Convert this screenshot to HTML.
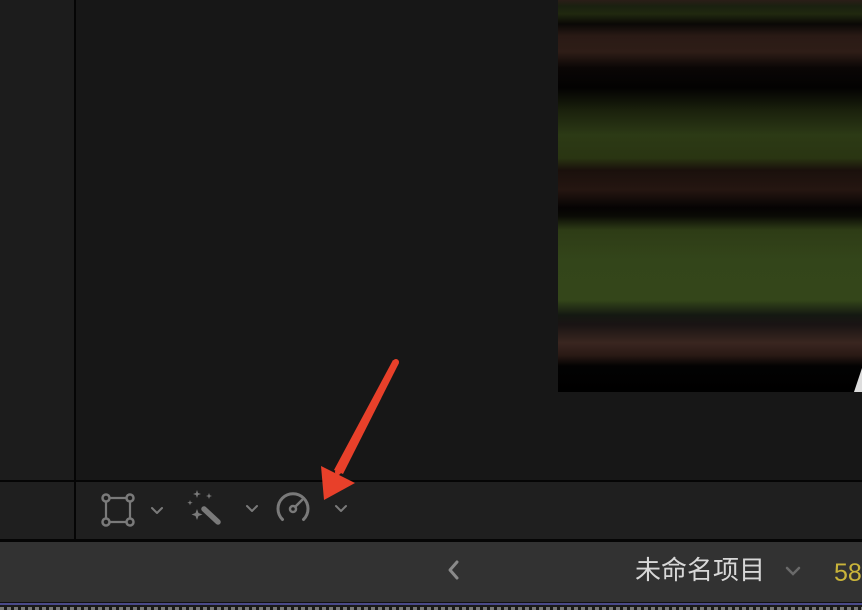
<!DOCTYPE html>
<html><head><meta charset="utf-8"><style>
html,body{margin:0;padding:0;}
body{width:862px;height:610px;position:relative;overflow:hidden;background:#171717;font-family:"Liberation Sans","Noto Sans CJK SC",sans-serif;}
.abs{position:absolute;}
</style></head><body>
<div class="abs" style="left:0;top:0;width:74px;height:540px;background:#1c1c1c"></div>
<div class="abs" style="left:74px;top:0;width:2px;height:540px;background:#050505"></div>
<div class="abs" style="left:558px;top:0;width:304px;height:392px;background:linear-gradient(to bottom,#2a1e18 0px,#1a2010 6px,#20280f 14px,#0a0806 24px,#2a1a15 36px,#2e1d17 52px,#0a0605 68px,#030202 88px,#1a200c 110px,#2c3a15 135px,#2a3512 158px,#1a100c 170px,#251611 190px,#050303 208px,#0a0a05 216px,#2e3c16 230px,#33451a 260px,#34461a 300px,#141812 315px,#1a1414 325px,#3a2620 343px,#2a1a15 355px,#030202 366px,#000 392px);"></div>
<svg class="abs" style="left:850px;top:368px" width="12" height="24"><polygon points="12,0 12,24 4,24" fill="#ddd"/></svg>
<div class="abs" style="left:0;top:480px;width:862px;height:2px;background:#050505"></div>
<div class="abs" style="left:0;top:482px;width:74px;height:57px;background:#1f1f1f"></div>
<div class="abs" style="left:76px;top:482px;width:786px;height:57px;background:#1f1f1f"></div>
<div class="abs" style="left:0;top:539px;width:862px;height:3px;background:#050505"></div>
<div class="abs" style="left:0;top:542px;width:862px;height:60px;background:#323232"></div>
<div class="abs" style="left:0;top:602px;width:862px;height:1px;background:#111"></div>
<div class="abs" style="left:0;top:603px;width:862px;height:2px;background:#4a4a8a"></div>
<div class="abs" style="left:0;top:605px;width:862px;height:5px;background:repeating-linear-gradient(to right,#777 0 4px,#1a1a1a 4px 7px);border-top:2px solid #1a1a1a;box-sizing:border-box"></div>
<svg class="abs" style="left:0;top:482px" width="400" height="57">
<g stroke="#7a7a7a" stroke-width="2.5" fill="none" stroke-linecap="round" stroke-linejoin="round">
<rect x="106" y="16" width="24" height="24" stroke-width="2.2"/>
<circle cx="106" cy="16" r="3.5" fill="#1f1f1f"/><circle cx="130" cy="16" r="3.5" fill="#1f1f1f"/>
<circle cx="106" cy="40" r="3.5" fill="#1f1f1f"/><circle cx="130" cy="40" r="3.5" fill="#1f1f1f"/>
<polyline points="152,26 157,31 162,26" stroke-width="2"/>
<line x1="204" y1="27" x2="218" y2="40" stroke-width="5.5"/>
<polyline points="247,24 252,29 257,24" stroke-width="2"/>
<path d="M282.5,37.5 A15,15 0 1 1 303.5,37.5" stroke-width="3"/>
<circle cx="293" cy="27" r="3" stroke-width="2.5"/>
<line x1="295.5" y1="24.5" x2="302" y2="18" stroke-width="2.5"/>
<polyline points="336,24 341,29 346,24" stroke-width="2"/>
</g>
<g fill="#7a7a7a">
<path d="M197,27 l1.5,4 4,1.5 -4,1.5 -1.5,4 -1.5,-4 -4,-1.5 4,-1.5z"/>
<path d="M197,8 l1,3 3,1 -3,1 -1,3 -1,-3 -3,-1 3,-1z"/>
<path d="M209,11 l.8,2.2 2.2,.8 -2.2,.8 -.8,2.2 -.8,-2.2 -2.2,-.8 2.2,-.8z"/>
<path d="M190,18 l.7,2 2,.7 -2,.7 -.7,2 -.7,-2 -2,-.7 2,-.7z"/>
</g>
</svg>
<svg class="abs" style="left:440px;top:555px" width="30" height="30"><polyline points="17,7 10,15 17,23" stroke="#8a8a8a" stroke-width="3" fill="none" stroke-linecap="round" stroke-linejoin="round"/></svg>
<div class="abs" style="left:635px;top:553px;font-size:26px;color:#d8d8d8;line-height:34px">未命名项目</div>
<svg class="abs" style="left:782px;top:562px" width="22" height="18"><polyline points="5,6 11,12 17,6" stroke="#6a6a6a" stroke-width="2.5" fill="none" stroke-linecap="round"/></svg>
<div class="abs" style="left:834px;top:556px;font-size:25px;color:#c9b43a;line-height:34px">58</div>
<svg class="abs" style="left:0;top:0" width="862" height="610">
<path d="M393,360 L399,363 L343,474 L334,470 Z" fill="#e8402a"/>
<line x1="396" y1="362" x2="338" y2="472" stroke="#e8402a" stroke-width="6" stroke-linecap="round"/>
<polygon points="321,466 355,483 324,500" fill="#e8402a"/>
</svg>
</body></html>
